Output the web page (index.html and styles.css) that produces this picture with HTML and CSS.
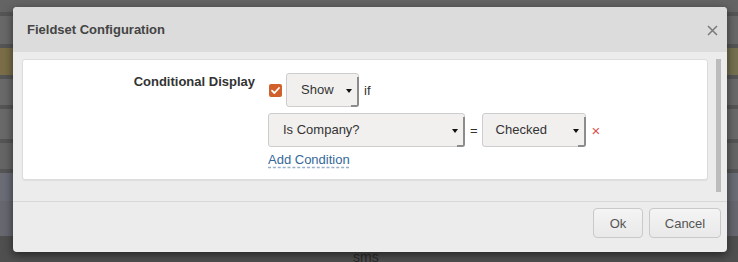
FILE: index.html
```html
<!DOCTYPE html>
<html>
<head>
<meta charset="utf-8">
<link rel="stylesheet" href="styles.css">
</head>
<body>
<div class="page">
  <div class="band b-top"></div>
  <div class="band b-line"></div>
  <div class="band b-a"></div>
  <div class="band b-line"></div>
  <div class="band b-yellow"></div>
  <div class="band b-line"></div>
  <div class="band b-b"></div>
  <div class="band b-line"></div>
  <div class="band b-c"></div>
  <div class="band b-line"></div>
  <div class="band b-d"></div>
  <div class="band b-line"></div>
  <div class="band b-blue"></div>
  <div class="band b-blue2"></div>
  <div class="band b-bottom"><span class="sms">sms</span></div>
</div>

<div class="modal">
  <div class="modal-header">
    <h4 class="modal-title">Fieldset Configuration</h4>
    <svg class="close" width="11" height="11" viewBox="0 0 11 11"><path d="M1 1L10 10M10 1L1 10" stroke="#7a7a7a" stroke-width="1.5" fill="none"/></svg>
  </div>
  <div class="modal-body">
    <div class="panel">
      <div class="label">Conditional Display</div>
      <div class="controls">
        <div class="row">
          <span class="checkbox"><svg width="13" height="13" viewBox="0 0 13 13"><path d="M3 6.6L5.4 9L10 4" stroke="#fff" stroke-width="1.8" fill="none" stroke-linecap="round" stroke-linejoin="round"/></svg></span>
          <div class="select sel-show">Show<span class="caret"></span></div>
          <span class="word">if</span>
        </div>
        <div class="row row2">
          <div class="select sel-field">Is Company?<span class="caret"></span></div>
          <span class="eq">=</span>
          <div class="select sel-val">Checked<span class="caret"></span></div>
          <span class="remove">×</span>
        </div>
        <div class="add"><a class="add-link">Add Condition</a></div>
      </div>
    </div>
    <div class="scrollbar"></div>
  </div>
  <div class="modal-footer">
    <button class="btn btn-ok">Ok</button>
    <button class="btn btn-cancel">Cancel</button>
  </div>
</div>
</body>
</html>
```

FILE: styles.css
```css
html, body {
  margin: 0;
  padding: 0;
}
body {
  width: 738px;
  height: 262px;
  overflow: hidden;
  font-family: "Liberation Sans", Arial, sans-serif;
  position: relative;
  background: #5e5e5e;
}
.page {
  display: flex;
  flex-direction: column;
  height: 262px;
  background-image: repeating-linear-gradient(-45deg, rgba(255,255,255,0.035) 0 4px, rgba(0,0,0,0.03) 4px 8px);
}
.band {
  flex: none;
}
.b-top { height: 12px; background: #646464; }
.b-line { height: 4px; background: #555; }
.b-a { height: 28px; background: #686868; }
.b-yellow { height: 27px; background: linear-gradient(to right, #7a6d47 0 20px, #666 20px 700px, #75704f 700px); }
.b-b { height: 26px; background: #696969; }
.b-c { height: 30px; background: #696969; }
.b-d { height: 26px; background: #656565; }
.b-blue { height: 28px; background: #6a6c76; }
.b-blue2 { height: 35px; background: #66676f; }
.b-bottom {
  flex: 1;
  background: #4f4f4f;
  padding-left: 353px;
}
.sms {
  display: block;
  font-size: 14px;
  line-height: 14px;
  color: #2a2a2a;
  margin-top: 14px;
}

.modal {
  position: absolute;
  left: 13px;
  top: 7px;
  width: 714px;
  height: 245px;
  background: #ececec;
  border-radius: 4px;
  box-shadow: 0 3px 10px rgba(0,0,0,0.55);
  overflow: hidden;
  display: flex;
  flex-direction: column;
}
.modal-header {
  height: 45px;
  box-sizing: border-box;
  background: #dcdcdc;
  display: flex;
  align-items: center;
  justify-content: space-between;
  padding: 0 9px 0 14px;
}
.modal-title {
  margin: 0;
  font-size: 13px;
  font-weight: bold;
  color: #444;
  line-height: 16px;
}
.close {
  display: block;
  margin-top: 1px;
}
.modal-body {
  height: 149px;
  box-sizing: border-box;
  padding: 7px 6px 0 9px;
  display: flex;
  align-items: flex-start;
}
.panel {
  width: 686px;
  height: 121px;
  box-sizing: border-box;
  background: #fff;
  border: 1px solid #dcdcdc;
  border-radius: 3px;
  box-shadow: 0 1px 1px rgba(0,0,0,0.06);
  display: grid;
  grid-template-columns: 245px 1fr;
  padding-top: 13px;
}
.label {
  text-align: right;
  padding-right: 13px;
  font-size: 13px;
  font-weight: bold;
  color: #333;
  line-height: 17px;
}
.controls {
  display: flex;
  flex-direction: column;
}
.row {
  display: flex;
  align-items: center;
  height: 34px;
}
.row2 {
  margin-top: 6px;
}
.checkbox {
  width: 13px;
  height: 13px;
  background: #d2602b;
  border-radius: 2px;
  margin-left: 1px;
  margin-right: 4px;
  margin-top: 1px;
  display: flex;
}
.checkbox svg { display: block; }
.select {
  position: relative;
  box-sizing: border-box;
  height: 34px;
  background: #f1f0ef;
  border: 1px solid #cdcdcd;
  border-radius: 3px;
  font-size: 13px;
  color: #333;
  line-height: 32px;
  padding-left: 14px;
}
.select::after {
  content: "";
  position: absolute;
  right: -1px;
  bottom: -1px;
  width: 8px;
  top: 3px;
  border-right: 2px solid #8c8c8c;
  border-bottom: 2px solid #8c8c8c;
  border-bottom-right-radius: 3px;
  box-sizing: border-box;
}
.caret {
  position: absolute;
  right: 6px;
  top: 15px;
  width: 0;
  height: 0;
  border-left: 3px solid transparent;
  border-right: 3px solid transparent;
  border-top: 4px solid #111;
}
.sel-show { width: 73px; }
.sel-field { width: 197px; }
.sel-val { width: 104px; padding-left: 13px; }
.word {
  font-size: 13px;
  color: #333;
  margin-left: 5px;
}
.eq {
  font-size: 13px;
  color: #333;
  margin: 0 4px 0 5px;
}
.remove {
  color: #d9534f;
  font-size: 15px;
  margin-left: 6px;
  line-height: 15px;
}
.add {
  margin-top: 4px;
  line-height: 17px;
  font-size: 13px;
}
.add-link {
  color: #34689a;
  text-decoration: underline dashed #9ab0c6;
  text-underline-offset: 3px;
  cursor: pointer;
}
.scrollbar {
  width: 5px;
  height: 133px;
  background: #bcbcbc;
  margin-left: 8px;
}
.modal-footer {
  flex: 1;
  border-top: 1px solid #d8d8d8;
  display: flex;
  justify-content: flex-end;
  align-items: flex-start;
  padding: 6px 6px 0 0;
  gap: 6px;
}
.btn {
  height: 30px;
  box-sizing: border-box;
  border: 1px solid #c9c9c9;
  border-radius: 4px;
  background: linear-gradient(#f4f4f4, #e9e9e9);
  font-family: "Liberation Sans", Arial, sans-serif;
  font-size: 13px;
  color: #555;
  padding: 0;
}
.btn-ok { width: 50px; }
.btn-cancel { width: 72px; }
```
